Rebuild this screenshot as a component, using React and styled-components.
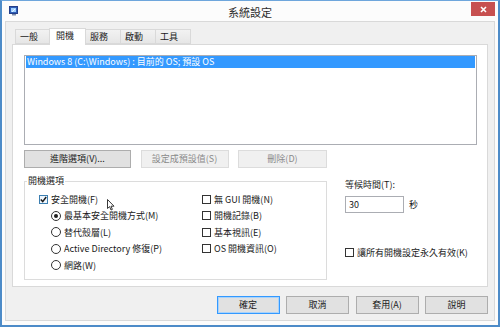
import React from "react";
import styled, { createGlobalStyle } from "styled-components";

const GlobalStyle = createGlobalStyle`
  html, body {
    margin: 0;
    padding: 0;
    background: #fff;
  }
  body {
    font-family: "Noto Sans CJK TC", "Noto Sans", sans-serif;
    font-size: 9px;
    color: #1a1a1a;
  }
  * {
    box-sizing: border-box;
  }
`;

const tabs = ["一般", "開機", "服務", "啟動", "工具"];

const leftOptions = [
  { kind: "check", label: "安全開機(F)", on: true, hover: true },
  { kind: "radio", label: "最基本安全開機方式(M)", on: true },
  { kind: "radio", label: "替代殼層(L)" },
  { kind: "radio", label: "Active Directory 修復(P)" },
  { kind: "radio", label: "網路(W)" },
];

const rightOptions = [
  "無 GUI 開機(N)",
  "開機記錄(B)",
  "基本視訊(E)",
  "OS 開機資訊(O)",
];

const App = () => {
  return (
    <>
      <GlobalStyle />
      <Window>
        <TitleBar>
          <TitleSide>
            <AppIcon />
          </TitleSide>
          <Title>系統設定</Title>
          <TitleSide $end>
            <CloseButton>
              <svg width="7" height="7" viewBox="0 0 7 7">
                <path d="M1 1 L6 6 M6 1 L1 6" stroke="#fff" strokeWidth="1.6" />
              </svg>
            </CloseButton>
          </TitleSide>
        </TitleBar>

        <Client>
          <TabStrip>
            {tabs.map((t) => (
              <Tab key={t} $active={t === "開機"}>
                {t}
              </Tab>
            ))}
          </TabStrip>

          <TabPage>
            <ListBox>
              <ListItem>Windows 8 (C:\Windows) : 目前的 OS; 預設 OS</ListItem>
            </ListBox>

            <ButtonRow>
              <Button $w={107}>進階選項(V)...</Button>
              <Button $w={88} disabled>
                設定成預設值(S)
              </Button>
              <Button $w={89} disabled>
                刪除(D)
              </Button>
            </ButtonRow>

            <Lower>
              <Group>
                <Legend>開機選項</Legend>
                <OptionGrid>
                  <OptionColumn>
                    {leftOptions.map((o) => (
                      <OptionRow key={o.label} $indent={o.kind === "radio"}>
                        {o.kind === "check" ? (
                          <CheckBox $hover={o.hover}>{o.on && <CheckMark />}</CheckBox>
                        ) : (
                          <Radio>{o.on && <RadioDot />}</Radio>
                        )}
                        <span>{o.label}</span>
                      </OptionRow>
                    ))}
                  </OptionColumn>
                  <OptionColumn>
                    {rightOptions.map((label) => (
                      <OptionRow key={label}>
                        <CheckBox />
                        <span>{label}</span>
                      </OptionRow>
                    ))}
                  </OptionColumn>
                </OptionGrid>
                <Cursor />
              </Group>

              <SideColumn>
                <FieldLabel>等候時間(T):</FieldLabel>
                <InputRow>
                  <TextInput>30</TextInput>
                  <span>秒</span>
                </InputRow>
                <PersistRow>
                  <CheckBox />
                  <span>讓所有開機設定永久有效(K)</span>
                </PersistRow>
              </SideColumn>
            </Lower>
          </TabPage>

          <Footer>
            <Button $w={63} $default>
              確定
            </Button>
            <Button $w={63}>取消</Button>
            <Button $w={63}>套用(A)</Button>
            <Button $w={63}>說明</Button>
          </Footer>
        </Client>
      </Window>
    </>
  );
};

export default App;

const AppIcon = () => (
  <svg width="10" height="10" viewBox="0 0 10 10">
    <rect x="0.5" y="0.5" width="8" height="7" fill="#2f5fb8" stroke="#233f8a" />
    <rect x="2" y="2" width="5" height="4" fill="#9fd0ff" />
    <path d="M3 6 L6 3" stroke="#e8f4ff" strokeWidth="1" />
    <rect x="3" y="8" width="4" height="1.5" fill="#7a8aa8" />
  </svg>
);

const CheckMark = () => (
  <svg width="7" height="7" viewBox="0 0 7 7">
    <path d="M0.8 3.6 L2.7 5.6 L6.2 1" stroke="#1b1b1b" strokeWidth="1.5" fill="none" />
  </svg>
);

const Cursor = () => (
  <CursorBox>
    <svg width="8" height="12" viewBox="0 0 8 12">
      <path
        d="M0.5 0.5 L0.5 9.5 L2.6 7.6 L4 11 L5.4 10.4 L4 7.2 L7 7.2 Z"
        fill="#fff"
        stroke="#222"
        strokeWidth="0.9"
        strokeLinejoin="round"
      />
    </svg>
  </CursorBox>
);

const Window = styled.div`
  width: 500px;
  height: 327px;
  display: flex;
  flex-direction: column;
  background: #fcfcfc;
  border: 2px solid #4d8bc8;
  border-top: 1px solid #6ea6dc;
`;

const TitleBar = styled.div`
  height: 20px;
  display: grid;
  grid-template-columns: 1fr auto 1fr;
  align-items: center;
`;

const TitleSide = styled.div`
  display: flex;
  align-items: flex-start;
  height: 100%;
  justify-content: ${(p) => (p.$end ? "flex-end" : "flex-start")};
  padding: ${(p) => (p.$end ? "1px 3px 0 0" : "5px 0 0 7px")};
`;

const Title = styled.div`
  font-size: 11px;
  color: #2b2b2b;
  line-height: 20px;
  padding-top: 1px;
`;

const CloseButton = styled.div`
  width: 24px;
  height: 14px;
  background: #c75050;
  display: flex;
  align-items: center;
  justify-content: center;
`;

const Client = styled.div`
  flex: 1;
  margin: 0 3px 4px 3px;
  border: 1px solid #d9d9d9;
  background: #f0f0f0;
  padding: 7px 6px 5px 6px;
  display: flex;
  flex-direction: column;
`;

const TabStrip = styled.div`
  display: flex;
  align-items: flex-end;
  height: 16px;
  padding-left: 3px;
  margin-bottom: -1px;
  position: relative;
  z-index: 1;
`;

const Tab = styled.div`
  width: ${(p) => (p.$active ? "37px" : "36px")};
  height: ${(p) => (p.$active ? "17px" : "15px")};
  margin: 0 -1px ${(p) => (p.$active ? "0" : "1px")} ${(p) => (p.$active ? "-1px" : "0")};
  padding-left: ${(p) => (p.$active ? "6px" : "4px")};
  border: 1px solid #d9d9d9;
  border-bottom: ${(p) => (p.$active ? "none" : "1px solid #d9d9d9")};
  background: ${(p) => (p.$active ? "#fff" : "linear-gradient(#f2f2f2, #e6e6e6)")};
  line-height: 13px;
  position: relative;
  z-index: ${(p) => (p.$active ? 2 : 1)};
`;

const TabPage = styled.div`
  height: 243px;
  background: #fff;
  border: 1px solid #d9d9d9;
  padding: 10px 10px 0 11px;
  display: flex;
  flex-direction: column;
`;

const ListBox = styled.div`
  height: 90px;
  border: 1px solid #abadb3;
  padding: 0 1px;
`;

const ListItem = styled.div`
  height: 12px;
  line-height: 12px;
  background: #3399ff;
  color: #fff;
  padding-left: 1px;
  white-space: nowrap;
`;

const ButtonRow = styled.div`
  display: flex;
  gap: 9.5px;
  margin-top: 5px;
`;

const Button = styled.button`
  width: ${(p) => p.$w}px;
  height: 18px;
  padding: 0;
  font-family: inherit;
  font-size: 9px;
  line-height: 16px;
  color: #1a1a1a;
  background: #e1e1e1;
  border: 1px solid ${(p) => (p.$default ? "#3399ff" : "#adadad")};
  box-shadow: ${(p) => (p.$default ? "inset 0 0 0 1px #a9d3fb" : "none")};

  &:disabled {
    color: #8a8a8a;
    background: #f0f0f0;
    border-color: #dcdcdc;
  }
`;

const Lower = styled.div`
  display: flex;
  margin-top: 7px;
`;

const Group = styled.fieldset`
  position: relative;
  width: 303px;
  height: 105px;
  margin: 0;
  padding: 0 0 0 2px;
  border: 1px solid #dcdcdc;
  min-inline-size: 0;
`;

const Legend = styled.legend`
  padding: 0 1px;
  line-height: 12px;
  font-size: 9px;
`;

const OptionGrid = styled.div`
  display: grid;
  grid-template-columns: 163px 1fr;
  margin: 4px 0 0 12px;
`;

const OptionColumn = styled.div`
  display: flex;
  flex-direction: column;
`;

const OptionRow = styled.div`
  display: flex;
  align-items: center;
  gap: 3px;
  height: 16.5px;
  white-space: nowrap;
  margin-left: ${(p) => (p.$indent ? "12px" : "0")};
`;

const CheckBox = styled.div`
  width: 9px;
  height: 9px;
  flex: none;
  border: 1px solid ${(p) => (p.$hover ? "#3c7fb1" : "#333")};
  background: ${(p) => (p.$hover ? "#eef6fd" : "#fff")};
  display: flex;
  align-items: center;
  justify-content: center;
`;

const Radio = styled.div`
  width: 10px;
  height: 10px;
  flex: none;
  border: 1px solid #333;
  border-radius: 50%;
  background: #fff;
  display: flex;
  align-items: center;
  justify-content: center;
`;

const RadioDot = styled.div`
  width: 4px;
  height: 4px;
  border-radius: 50%;
  background: #1f1f1f;
`;

const CursorBox = styled.div`
  position: absolute;
  left: 82px;
  top: 12px;
  line-height: 0;
`;

const SideColumn = styled.div`
  display: flex;
  flex-direction: column;
  margin-left: 18px;
  padding-top: 4px;
`;

const FieldLabel = styled.div`
  line-height: 12px;
`;

const InputRow = styled.div`
  display: flex;
  align-items: center;
  gap: 5px;
  margin-top: 5px;
`;

const TextInput = styled.div`
  width: 59px;
  height: 17px;
  border: 1px solid #abadb3;
  padding-left: 3px;
  line-height: 15px;
  background: #fff;
`;

const PersistRow = styled(OptionRow)`
  margin-top: 31px;
`;

const Footer = styled.div`
  display: flex;
  justify-content: flex-end;
  gap: 6.5px;
  margin-top: 9px;
`;
